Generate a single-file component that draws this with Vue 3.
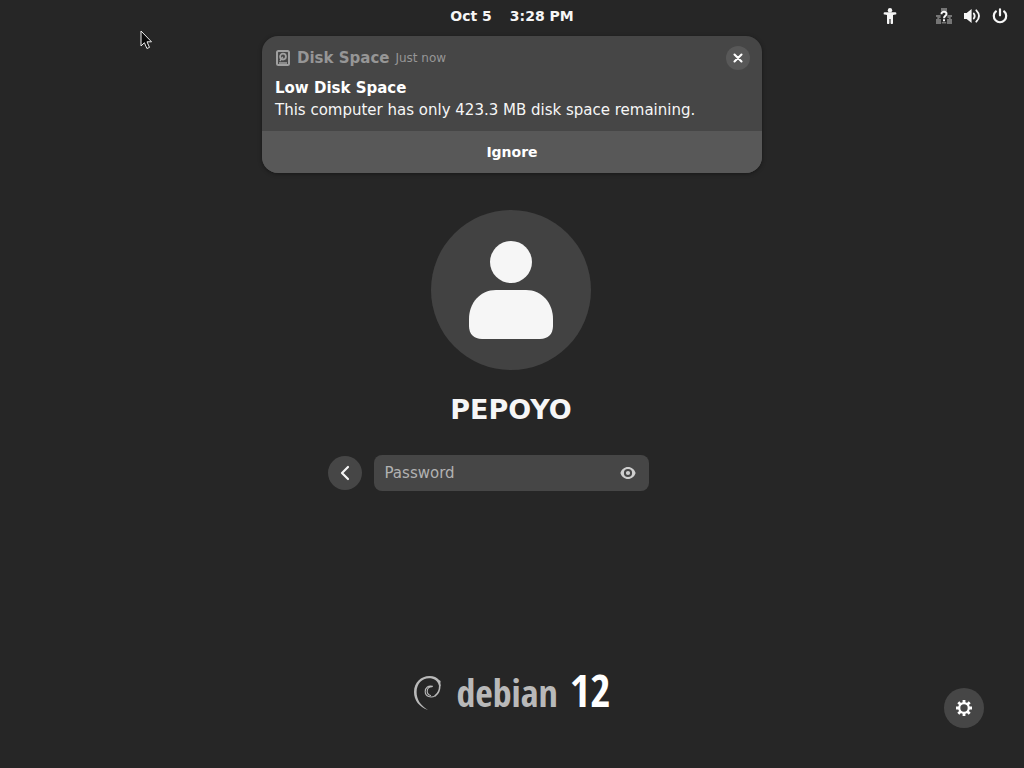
<script setup>
import { ref } from 'vue'

const password = ref('')
const revealed = ref(false)
const notice = ref(true)
</script>

<template>
  <div class="screen">
    <header class="panel">
      <button class="clock" type="button">
        <span>Oct 5</span>
        <span>3:28 PM</span>
      </button>
      <div class="status">
        <button class="plain" type="button" aria-label="Accessibility">
          <svg viewBox="0 0 16 16" fill="currentColor">
            <circle cx="8" cy="2.2" r="2.2" />
            <path d="M2.800 4.200h10.400a1.200 1.200 0 0 1 0 2.400L11 7v8a1.200 1.200 0 0 1-2.400 0v-4H7.400v4A1.200 1.200 0 0 1 5 15V7l-2.200-.4a1.200 1.200 0 0 1 0-2.400z" />
          </svg>
        </button>
        <button class="plain system" type="button" aria-label="System menu">
          <svg viewBox="0 0 16 16" fill="currentColor">
            <path opacity=".38" d="M5 0h6v3H5zM0 7h4.600v3H3.200v1H5v5H0v-5h1.300V9H0zM16 7h-4.600v3h1.400v1H11v5h5v-5h-1.300V9H16zM5.800 14h4.400v1.400H5.800z" />
            <g fill="none" stroke="currentColor" stroke-width="2">
              <path d="M5.500 6.200C5.500 4.500 6.500 3.800 8 3.800s2.500.8 2.500 2.100C10.500 7.600 8 7.900 8 10.200" />
            </g>
            <path d="M7 11.200h2v2H7z" />
          </svg>
          <svg viewBox="0 0 16 16">
            <path fill="currentColor" d="M0 5h2.600L7.600 1v14L2.600 11H0z" />
            <g fill="none" stroke="currentColor" stroke-width="1.800" stroke-linecap="round">
              <path d="M9.800 5.500q1.800 2.500 0 5" />
              <path d="M12.300 2.300q5.400 5.700 0 11.400" />
            </g>
          </svg>
          <svg viewBox="0 0 16 16" fill="none" stroke="currentColor" stroke-width="2.200" stroke-linecap="round">
            <path d="M3.900 3.400a6.200 6.200 0 1 0 8.200 0M8 1.300v6" />
          </svg>
        </button>
      </div>
    </header>

    <section v-if="notice" class="notice">
      <div class="notice-body">
        <div class="notice-head">
          <svg class="disk" viewBox="0 0 16 16" fill="none" stroke="currentColor">
            <rect x="2" y="1" width="12" height="14" rx="1.500" stroke-width="2" />
            <circle cx="8" cy="6.600" r="2.900" stroke-width="1.800" />
            <path d="M5 11 7.800 6.800M4 13h8" stroke-width="1.400" />
          </svg>
          <span class="source">Disk Space</span>
          <span class="time">Just now</span>
          <button class="close" type="button" aria-label="Close" @click="notice = false">
            <svg viewBox="0 0 16 16" fill="none" stroke="currentColor" stroke-width="2.400" stroke-linecap="round">
              <path d="m4 4 8 8m0-8-8 8" />
            </svg>
          </button>
        </div>
        <h2>Low Disk Space</h2>
        <p>This computer has only 423.3 MB disk space remaining.</p>
      </div>
      <button class="ignore" type="button" @click="notice = false">Ignore</button>
    </section>

    <main class="login">
      <svg class="avatar" viewBox="0 0 160 160">
        <circle cx="80" cy="80" r="80" fill="#424242" />
        <circle cx="80" cy="52" r="21" fill="#f6f6f6" />
        <path fill="#f6f6f6" d="M65 80h30c16 0 27 13 27 29v7c0 8-5 13-13 13H51c-8 0-13-5-13-13v-7c0-16 11-29 27-29z" />
      </svg>
      <h1>PEPOYO</h1>
      <form class="prompt" @submit.prevent>
        <button class="back" type="button" aria-label="Back">
          <svg viewBox="0 0 16 16" fill="none" stroke="currentColor" stroke-width="2.200" stroke-linecap="round" stroke-linejoin="round">
            <path d="M11 2 5 8l6 6" />
          </svg>
        </button>
        <div class="entry">
          <input v-model="password" :type="revealed ? 'text' : 'password'" placeholder="Password" aria-label="Password" />
          <button class="plain eye" type="button" aria-label="Show password" @click="revealed = !revealed">
            <svg viewBox="0 0 16 16">
              <path fill="currentColor" fill-rule="evenodd" d="M8 2C4.500 2 1.400 4.500.4 8c1 3.500 4.100 6 7.600 6s6.600-2.500 7.600-6C14.600 4.500 11.500 2 8 2zm0 1.900a4.100 4.100 0 1 1 0 8.200 4.100 4.100 0 0 1 0-8.200zm0 2a2.100 2.100 0 1 0 0 4.200 2.100 2.100 0 0 0 0-4.200z" />
            </svg>
          </button>
        </div>
      </form>
    </main>

    <footer class="brand">
      <svg class="swirl" viewBox="0 0 28 36">
        <path fill="#b9b9b9" d="M15 35C6 32 1 25 1 17 1 7.500 8 1 16.500 1 21 1 24 2.500 25.800 4.800L27.600 6l-.3 3.200.4 1.800-1.700-.5C24.500 5.500 21 3.300 16 3.300 9 3.300 3.600 9 3.600 17c0 7.500 3.900 13.500 11.400 18z" />
        <g fill="none" stroke="#b9b9b9" stroke-linecap="round">
          <path stroke-width="1.600" d="M26.600 9c.6 5-1 9.200-4.300 11.700" />
          <path stroke-width="1.100" d="M22.500 20.600c-4.600 3-10.300 1-10.300-4 0-4 3.300-6.600 7.300-5.300M19 11.600c-3 0-4.800 2-4.800 4.600 0 2 1.200 3.600 3.300 4.300" />
        </g>
      </svg>
      <div class="name">
        <span class="word">debian</span>
        <span class="version">12</span>
      </div>
    </footer>

    <button class="session" type="button" aria-label="Session settings">
      <svg viewBox="0 0 16 16" fill="none" stroke="currentColor">
        <circle cx="8" cy="8" r="4.800" stroke-width="2.200" />
        <path stroke-width="2.800" d="M8 0v3M8 13v3M0 8h3M13 8h3M2.300 2.300l2.200 2.200M11.500 11.500l2.200 2.200M13.700 2.300l-2.200 2.200M4.500 11.500l-2.200 2.200" />
      </svg>
    </button>

    <svg class="pointer" viewBox="0 0 12 20" fill="#080808" stroke="#ededed" stroke-width="1">
      <path d="M1 1v15l3.400-3.300 2.500 5.800 2.600-1.100L7 11.800h4.500z" />
    </svg>
  </div>
</template>

<style>
body {
  margin: 0;
  background: #262626;
}
</style>

<style scoped>
.screen {
  position: relative;
  display: flex;
  flex-direction: column;
  align-items: center;
  box-sizing: border-box;
  min-height: 100vh;
  background: #262626;
  color: #f6f6f6;
  font-family: "DejaVu Sans", sans-serif;
  font-size: 15px;
  line-height: 20px;
}
button {
  padding: 0;
  border: 0;
  color: inherit;
  font: inherit;
  cursor: default;
}
svg {
  display: block;
  flex: none;
  width: 16px;
  height: 16px;
}
h1, h2, p {
  margin: 0;
}
.panel {
  display: grid;
  grid-template-columns: 1fr auto 1fr;
  align-items: center;
  align-self: stretch;
  height: 32px;
}
.clock {
  grid-column: 2;
  display: flex;
  gap: 18px;
  background: none;
  font-size: 14px;
  font-weight: 700;
}
.status {
  display: flex;
  justify-content: flex-end;
  gap: 38px;
  padding-right: 16px;
}
.plain {
  display: flex;
  background: none;
}
.system {
  gap: 12px;
}
.notice {
  position: absolute;
  top: 36px;
  left: 50%;
  width: 500px;
  max-width: 100%;
  transform: translateX(-50%);
  overflow: hidden;
  border-radius: 16px;
  background: #464646;
  box-shadow: 0 1px 4px rgba(0, 0, 0, 0.4);
}
.notice-body {
  padding: 10px 12px 11px 13px;
}
.notice-head {
  display: flex;
  align-items: center;
  gap: 6px;
  height: 24px;
  margin-bottom: 8px;
  color: #969696;
}
.disk {
  color: #a0a0a0;
}
.source {
  font-weight: 700;
}
.time {
  font-size: 12px;
}
.close {
  display: grid;
  place-items: center;
  width: 24px;
  height: 24px;
  margin-left: auto;
  border-radius: 50%;
  background: #585858;
  color: #fff;
}
.close svg {
  width: 14px;
  height: 14px;
}
.notice h2 {
  margin-bottom: 2px;
  font-size: 15px;
  line-height: 20px;
  color: #fff;
}
.ignore {
  display: block;
  width: 100%;
  height: 42px;
  background: #585858;
  color: #fff;
  font-size: 14px;
  font-weight: 700;
}
.login {
  display: flex;
  flex: 1;
  flex-direction: column;
  align-items: center;
  padding: 178px 2px 0 0;
}
.avatar {
  width: 160px;
  height: 160px;
}
h1 {
  margin: 23px 0 28px;
  font-size: 27px;
  line-height: 34px;
}
.prompt {
  display: flex;
  align-items: center;
  gap: 12px;
  padding-right: 46px;
}
.back {
  display: grid;
  place-items: center;
  width: 34px;
  height: 34px;
  border-radius: 50%;
  background: #464646;
}
.entry {
  display: flex;
  align-items: center;
  box-sizing: border-box;
  width: 275px;
  height: 36px;
  padding: 0 13px 0 11px;
  border-radius: 8px;
  background: #464646;
}
.entry input {
  flex: 1;
  min-width: 0;
  padding: 0;
  border: 0;
  outline: 0;
  background: none;
  color: inherit;
  font: inherit;
}
.entry input::placeholder {
  color: #b2b2b2;
  opacity: 1;
}
.eye {
  color: #cfcfcf;
}
.brand {
  display: flex;
  align-items: center;
  gap: 15px;
  margin-bottom: 50px;
}
.swirl {
  width: 28px;
  height: 36px;
}
.name {
  display: flex;
  align-items: baseline;
  gap: 12px;
  height: 50px;
  font-family: "Open Sans Condensed", "Liberation Sans Narrow", "DejaVu Sans Condensed", sans-serif;
  font-weight: 700;
  line-height: 44px;
}
.word {
  color: #b9b9b9;
  font-size: 38px;
}
.version {
  color: #fff;
  font-size: 44px;
}
.session {
  position: absolute;
  right: 40px;
  bottom: 40px;
  display: grid;
  place-items: center;
  width: 40px;
  height: 40px;
  border-radius: 50%;
  background: #464646;
  color: #fff;
}
.pointer {
  position: absolute;
  top: 30px;
  left: 140px;
  width: 12px;
  height: 20px;
}
</style>
